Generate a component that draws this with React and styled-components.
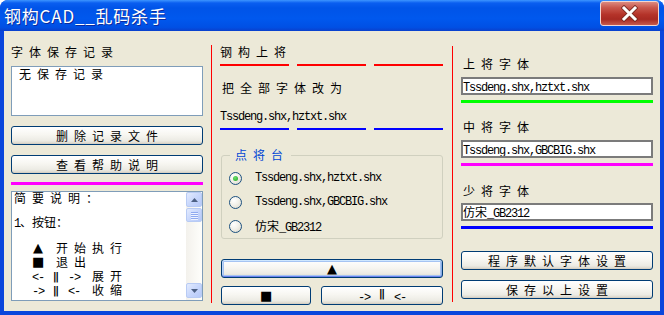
import React from 'react'
import styled, { createGlobalStyle } from 'styled-components'

const GlobalStyle = createGlobalStyle`
  html, body {
    margin: 0;
    padding: 0;
    background: #ffffff;
  }
  body {
    font-family: 'Noto Sans CJK SC', 'Noto Sans', sans-serif;
    font-size: 12px;
    color: #000;
  }
`

const Window = styled.div`
  width: 664px;
  height: 315px;
  display: flex;
  flex-direction: column;
  background: #0a46dc;
  border-radius: 8px 8px 0 0;
  overflow: hidden;
`

const TitleBar = styled.div`
  height: 31px;
  flex: none;
  display: flex;
  justify-content: space-between;
  align-items: flex-start;
  padding-left: 4px;
  background: linear-gradient(
    #3d95ff 0,
    #0a5ef0 3px,
    #0054e8 8px,
    #0058ee 60%,
    #0050e4 88%,
    #0a3fcc 100%
  );
`

const Title = styled.div`
  margin-top: 5px;
  color: #fff;
  font-size: 17px;
  line-height: 22px;
  letter-spacing: 0.8px;
  text-shadow: 1px 1px 0 #0b2a9c;
`

const CloseButton = styled.div`
  width: 57px;
  height: 23px;
  margin: 1px 5px 0 0;
  border: 1px solid #f2d6d0;
  border-radius: 3px;
  display: flex;
  align-items: center;
  justify-content: center;
  background: linear-gradient(
    #dc8a80 0,
    #c9574c 25%,
    #b43329 55%,
    #a82a22 75%,
    #c65a4c 100%
  );
`

const Client = styled.div`
  flex: 1;
  margin: 0 4px 4px;
  padding: 0 7px;
  background: #ece9d8;
  display: flex;
`

const Column = styled.div`
  width: ${(p) => p.$w}px;
  padding-top: ${(p) => p.$top}px;
  display: flex;
  flex-direction: column;
`

const Divider = styled.div`
  width: 1px;
  background: #ff0000;
  margin: ${(p) => p.$top}px 8px ${(p) => p.$bottom}px ${(p) => p.$left}px;
`

const Label = styled.div`
  line-height: 14px;
  letter-spacing: 6px;
  padding-left: ${(p) => p.$indent || 0}px;
  margin-top: ${(p) => p.$mt || 0}px;
  white-space: nowrap;
`

const Latin = styled.span`
  font-family: 'Liberation Mono', monospace;
  font-size: 12px;
  letter-spacing: -1.2px;
  white-space: pre;
`

const Spaced = styled.span`
  letter-spacing: 6px;
`

// full-width cell, like the SimSun glyphs ▲ ■ ‖
const Full = styled.span`
  display: inline-block;
  width: 12px;
  height: 12px;
  line-height: 12px;
  vertical-align: top;
  text-align: center;
  font-family: 'DejaVu Sans', sans-serif;
  font-size: 13px;
  letter-spacing: 0;
`

const DoubleBar = styled(Full)`
  font-size: 15px;
  transform: scaleY(0.72);
`

const ListBox = styled.div`
  height: 48px;
  margin-top: 7px;
  border: 1px solid #7f9db9;
  background: #fff;
  padding: 0 7px;
  line-height: 14px;
  letter-spacing: 6px;
`

const XpButton = styled.div`
  height: ${(p) => p.$h || 19}px;
  box-sizing: border-box;
  margin-top: ${(p) => p.$mt || 0}px;
  margin-left: ${(p) => p.$ml || 0}px;
  flex: ${(p) => (p.$grow ? 1 : 'none')};
  width: ${(p) => (p.$w ? `${p.$w}px` : 'auto')};
  border: 1px solid #003c74;
  border-radius: 3px;
  display: flex;
  align-items: center;
  justify-content: center;
  padding-left: ${(p) => (p.$spaced ? 6 : 0)}px;
  letter-spacing: ${(p) => (p.$spaced ? 6 : 0)}px;
  background: linear-gradient(#ffffff 0, #f7f6f1 45%, #ecebe4 80%, #d8d3c7 100%);
  box-shadow: ${(p) =>
    p.$default
      ? 'inset 0 1px 0 #cee7ff, inset 0 -1px 0 #6982ee, inset 1px 0 0 #bcd4f6, inset -1px 0 0 #89ade4, inset 0 0 0 2px #a6c4f2'
      : 'inset 0 -1px 0 #d6d0c5'};
  white-space: nowrap;
`

const ColorBar = styled.div`
  height: 3px;
  flex: none;
  margin-top: ${(p) => p.$mt || 0}px;
  background: ${(p) => p.$color};
`

const HelpBox = styled.div`
  height: 108px;
  margin-top: 6px;
  border: 1px solid #7f9db9;
  background: #fff;
  display: flex;
`

const HelpText = styled.div`
  flex: 1;
  padding: 0 2px;
  line-height: 12px;
  white-space: pre;
`

const ScrollBar = styled.div`
  width: 16px;
  display: flex;
  flex-direction: column;
  background: linear-gradient(90deg, #f3f1ec, #fefefb);
`

const ScrollButton = styled.div`
  height: ${(p) => p.$h || 15}px;
  margin: ${(p) => p.$m || '0'};
  box-sizing: border-box;
  border: 1px solid #b8cbf4;
  border-radius: 2px;
  background: linear-gradient(135deg, #e3ebfe 0, #c8d7fc 50%, #b6c9f8 100%);
  display: flex;
  flex-direction: column;
  align-items: center;
  justify-content: center;
  gap: 1px;
`

const Grip = styled.div`
  width: 7px;
  height: 1px;
  background: #8faaf0;
  box-shadow: 0 1px 0 #eef3ff;
`

const Track = styled.div`
  flex: 1;
`

const LineRow = styled.div`
  display: flex;
  gap: 8px;
  margin-top: ${(p) => p.$mt}px;
`

const LineSeg = styled.div`
  flex: 1;
  height: 2px;
  background: ${(p) => p.$color};
`

const Group = styled.fieldset`
  margin: 18px 0 0 1px;
  padding: 4px 0 0 7px;
  border: 1px solid #d0d0bf;
  border-radius: 3px;
  min-width: 0;
`

const Legend = styled.legend`
  margin-left: 1px;
  padding: 0 2px 0 5px;
  color: #0046d5;
  line-height: 14px;
  letter-spacing: 6px;
`

const RadioRow = styled.div`
  height: 24px;
  display: flex;
  align-items: center;
  gap: 13px;
`

const Radio = styled.span`
  width: 13px;
  height: 13px;
  box-sizing: border-box;
  border-radius: 50%;
  border: 1px solid #1c5180;
  background: radial-gradient(circle at 35% 30%, #ffffff 0, #f2f1ea 45%, #d8d5c8 100%);
  display: flex;
  align-items: center;
  justify-content: center;
  &::after {
    content: '';
    display: ${(p) => (p.$checked ? 'block' : 'none')};
    width: 5px;
    height: 5px;
    border-radius: 50%;
    background: radial-gradient(circle at 40% 35%, #6ee16e, #21a121);
  }
`

const ButtonRow = styled.div`
  display: flex;
  gap: 10px;
  margin: 8px 0 0 1px;
`

const TextBox = styled.div`
  height: 18px;
  box-sizing: border-box;
  margin-top: ${(p) => p.$mt}px;
  border: 2px solid #7b7b7b;
  background: #fff;
  line-height: 14px;
  white-space: nowrap;
  overflow: hidden;
`

const Arrow = ({ up }) => (
  <svg width='7' height='4' viewBox='0 0 7 4'>
    <path d={up ? 'M0 4 L3.5 0 L7 4 Z' : 'M0 0 L3.5 4 L7 0 Z'} fill='#4d6185' />
  </svg>
)

export default function App() {
  return (
    <>
      <GlobalStyle />
      <Window>
        <TitleBar>
          <Title>钢构CAD__乱码杀手</Title>
          <CloseButton>
            <svg width='17' height='17' viewBox='0 0 17 17'>
              <path d='M3 3 L14 14 M14 3 L3 14' stroke='#7a2a22' strokeWidth='4.6' strokeLinecap='square' />
              <path d='M3 3 L14 14 M14 3 L3 14' stroke='#ffffff' strokeWidth='3' strokeLinecap='square' />
            </svg>
          </CloseButton>
        </TitleBar>
        <Client>
          <Column $w={192} $top={14}>
            <Label>字体保存记录</Label>
            <ListBox>无保存记录</ListBox>
            <XpButton $mt={10} $spaced>删除记录文件</XpButton>
            <XpButton $mt={10} $spaced>查看帮助说明</XpButton>
            <ColorBar $mt={8} $color='#ff00ff' />
            <HelpBox>
              <HelpText>
                <div><Spaced>简要说明：</Spaced></div>
                <div> </div>
                <div><Latin>1</Latin>、按钮：</div>
                <div> </div>
                <div><Latin>{'   '}</Latin><Full>▲</Full><Latin>{'  '}</Latin><Spaced>开始执行</Spaced></div>
                <div><Latin>{'   '}</Latin><Full>■</Full><Latin>{'  '}</Latin><Spaced>退出</Spaced></div>
                <div><Latin>{'   <- '}</Latin><DoubleBar>‖</DoubleBar><Latin>{' ->  '}</Latin><Spaced>展开</Spaced></div>
                <div><Latin>{'   -> '}</Latin><DoubleBar>‖</DoubleBar><Latin>{' <-  '}</Latin><Spaced>收缩</Spaced></div>
              </HelpText>
              <ScrollBar>
                <ScrollButton $h={15}><Arrow up /></ScrollButton>
                <ScrollButton $h={14} $m='1px 0 0'>
                  <Grip /><Grip /><Grip /><Grip />
                </ScrollButton>
                <Track />
                <ScrollButton $h={15} $m='0 0 2px'><Arrow /></ScrollButton>
              </ScrollBar>
            </HelpBox>
          </Column>

          <Divider $top={14} $left={8} $bottom={8} />

          <Column $w={223} $top={14}>
            <Label>钢构上将</Label>
            <LineRow $mt={5}>
              <LineSeg $color='#ff0000' />
              <LineSeg $color='#ff0000' />
              <LineSeg $color='#ff0000' />
            </LineRow>
            <Label $indent={2} $mt={15}>把全部字体改为</Label>
            <Label $mt={13}><Latin>Tssdeng.shx,hztxt.shx</Latin></Label>
            <LineRow $mt={4}>
              <LineSeg $color='#0000ff' />
              <LineSeg $color='#0000ff' />
              <LineSeg $color='#0000ff' />
            </LineRow>
            <Group>
              <Legend>点将台</Legend>
              <RadioRow>
                <Radio $checked />
                <Latin>Tssdeng.shx,hztxt.shx</Latin>
              </RadioRow>
              <RadioRow>
                <Radio />
                <Latin>Tssdeng.shx,GBCBIG.shx</Latin>
              </RadioRow>
              <RadioRow>
                <Radio />
                <span>仿宋<Latin>_GB2312</Latin></span>
              </RadioRow>
            </Group>
            <XpButton $mt={20} $ml={1} $default><Full>▲</Full></XpButton>
            <ButtonRow>
              <XpButton $w={90}><Full>■</Full></XpButton>
              <XpButton $grow>
                <span>
                  <Latin>{'-> '}</Latin>
                  <DoubleBar>‖</DoubleBar>
                  <Latin>{' <-'}</Latin>
                </span>
              </XpButton>
            </ButtonRow>
          </Column>

          <Divider $top={15} $left={9} $bottom={9} />

          <Column $w={192} $top={26}>
            <Label $indent={2}>上将字体</Label>
            <TextBox $mt={6}><Latin>Tssdeng.shx,hztxt.shx</Latin></TextBox>
            <ColorBar $mt={5} $color='#00ff00' />
            <Label $indent={2} $mt={17}>中将字体</Label>
            <TextBox $mt={6}><Latin>Tssdeng.shx,GBCBIG.shx</Latin></TextBox>
            <ColorBar $mt={5} $color='#ff00ff' />
            <Label $indent={2} $mt={18}>少将字体</Label>
            <TextBox $mt={5}>仿宋<Latin>_GB2312</Latin></TextBox>
            <ColorBar $mt={5} $color='#0000ff' />
            <XpButton $mt={22} $spaced>程序默认字体设置</XpButton>
            <XpButton $mt={10} $spaced>保存以上设置</XpButton>
          </Column>
        </Client>
      </Window>
    </>
  )
}
